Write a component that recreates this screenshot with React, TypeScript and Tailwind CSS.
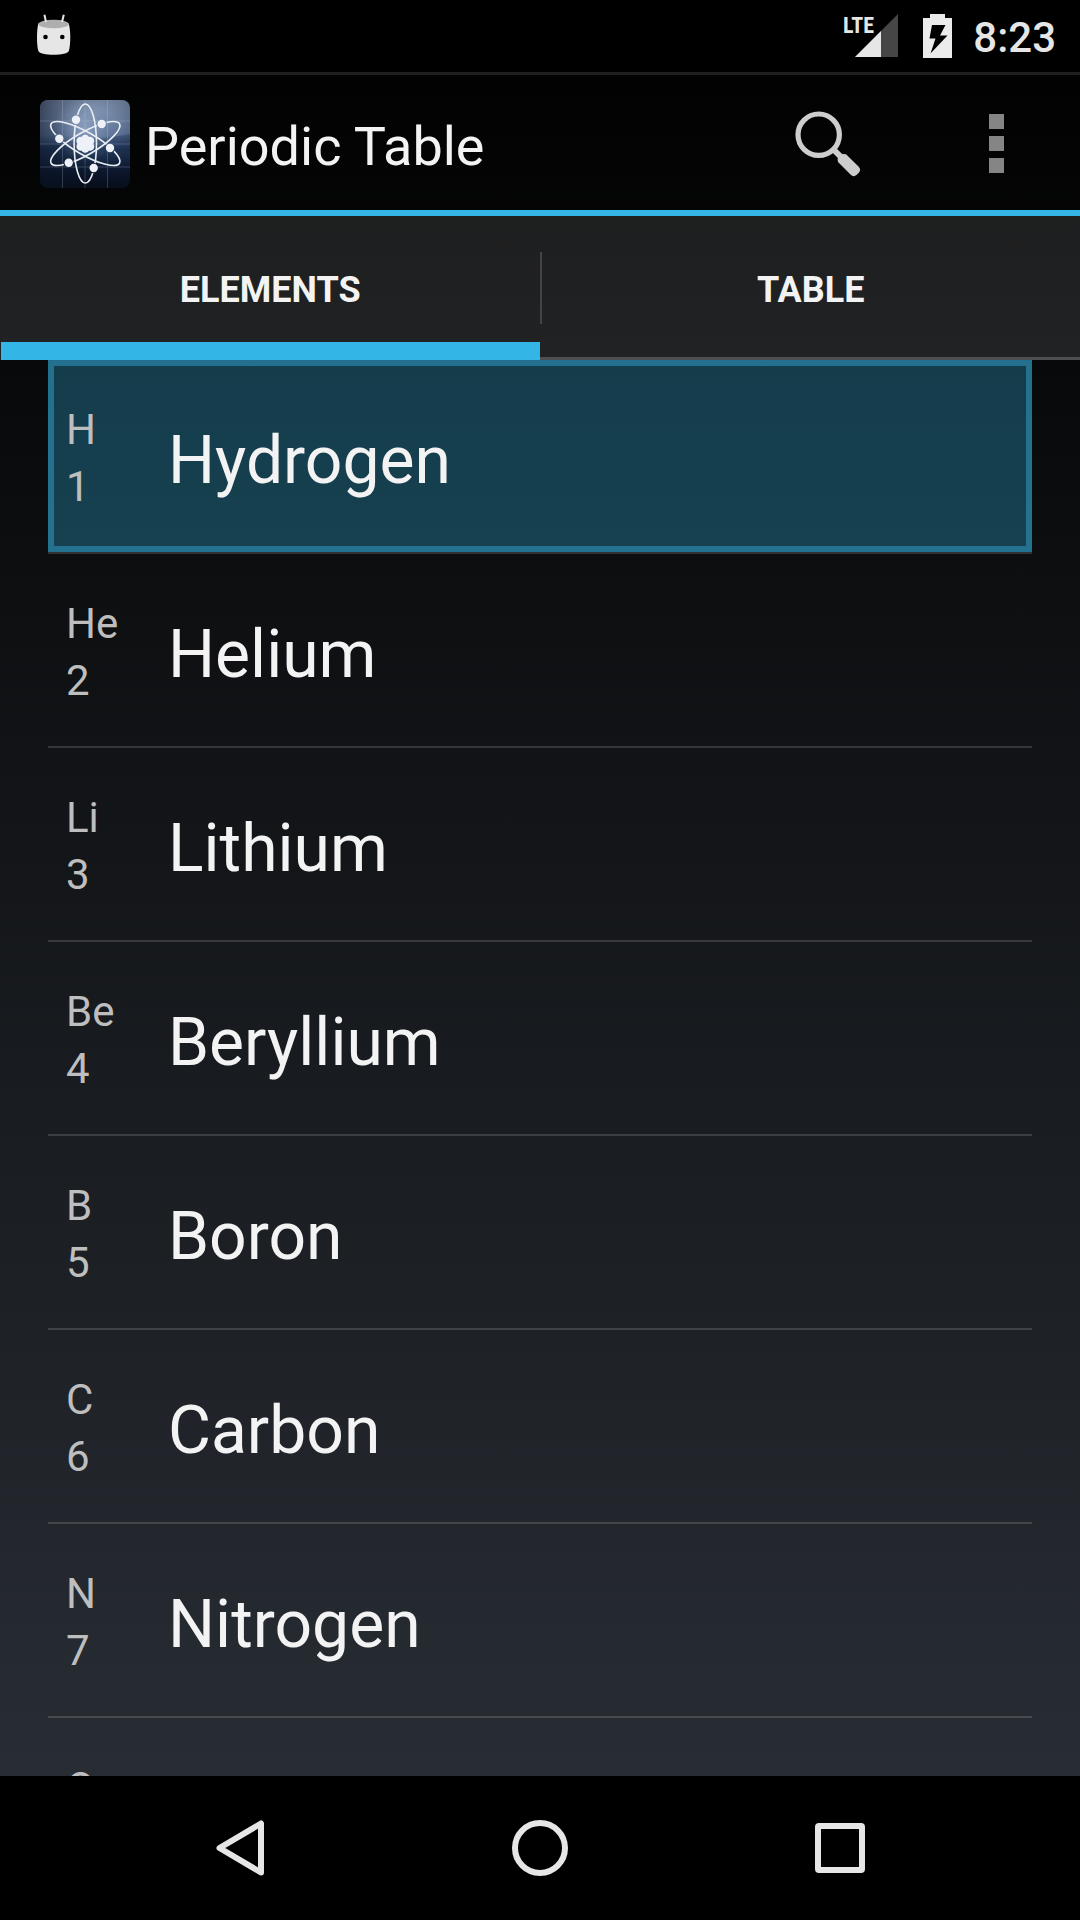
import { useState } from "react";

const ELEMENTS = [
  { symbol: "H", number: 1, name: "Hydrogen" },
  { symbol: "He", number: 2, name: "Helium" },
  { symbol: "Li", number: 3, name: "Lithium" },
  { symbol: "Be", number: 4, name: "Beryllium" },
  { symbol: "B", number: 5, name: "Boron" },
  { symbol: "C", number: 6, name: "Carbon" },
  { symbol: "N", number: 7, name: "Nitrogen" },
  { symbol: "O", number: 8, name: "Oxygen" },
];

const ELECTRONS = [
  [36, 19.7],
  [61.7, 24],
  [19.3, 38.7],
  [70, 48],
  [28.7, 62.7],
  [53.7, 68],
];

function DroidIcon() {
  return (
    <svg width="36" height="44" viewBox="0 0 36 44" aria-hidden="true">
      <path d="M2.4 9.5C.6 15 .6 30 2.2 36.5 3.2 42.3 32 42.3 33 36.5 34.8 30 34.8 15 32.6 9.500z" fill="#e6e6e6" />
      <ellipse cx="17.600" cy="10" rx="15.200" ry="4.300" fill="#aeaeae" />
      <path d="M8.400.8 10 8M27.800.8 26 8" stroke="#e6e6e6" strokeWidth="2" />
      <circle cx="9.500" cy="23" r="2.300" fill="#000" />
      <circle cx="26.300" cy="23" r="2.300" fill="#000" />
    </svg>
  );
}

function SignalIcon() {
  return (
    <svg width="57" height="44" viewBox="0 0 57 44" role="img" aria-label="LTE signal">
      <path d="M13 43 56 0V43z" fill="#464646" />
      <path d="M13 43 39 17V43z" fill="#e6e6e6" />
      <text x="1" y="19" fontSize="22" className="font-['Roboto_Condensed','Liberation_Sans_Narrow',Roboto,sans-serif] font-bold" fill="#e6e6e6">
        LTE
      </text>
    </svg>
  );
}

function BatteryIcon() {
  return (
    <svg width="29" height="44" viewBox="0 0 29 44" role="img" aria-label="Battery charging">
      <path d="M7 0H22V4H29V44H0V4H7z" fill="#ebebeb" />
      <path d="M9 11H22.500L17 21.500H24.500L7.500 39.500 12.500 24.500H6.500z" fill="#000" />
    </svg>
  );
}

function AtomLogo() {
  return (
    <svg width="90" height="88" viewBox="0 0 90 88" aria-hidden="true">
      <defs>
        <linearGradient id="sky" x1="0" y1="0" x2="0" y2="1">
          <stop offset="0" stopColor="#8295b1" />
          <stop offset=".4" stopColor="#5b7093" />
          <stop offset=".55" stopColor="#233b5d" />
          <stop offset=".8" stopColor="#0d1b33" />
          <stop offset="1" stopColor="#050a14" />
        </linearGradient>
        <radialGradient id="shade" cx=".65" cy=".35" r=".8">
          <stop offset=".3" stopColor="#0a1222" stopOpacity="0" />
          <stop offset="1" stopColor="#0a1222" stopOpacity=".7" />
        </radialGradient>
        <radialGradient id="glow">
          <stop offset="0" stopColor="#dbe8ff" stopOpacity=".35" />
          <stop offset="1" stopColor="#a9c2ea" stopOpacity="0" />
        </radialGradient>
        <mask id="gaps">
          <rect width="90" height="88" fill="#fff" />
          {ELECTRONS.map(([x, y]) => (
            <circle key={x} cx={x} cy={y} r="5.200" fill="#000" />
          ))}
        </mask>
      </defs>
      <rect width="90" height="88" rx="8" fill="url(#sky)" />
      <path d="M0 44Q50 42 90 34V52H0z" fill="#1a2f50" opacity=".35" />
      <rect width="90" height="88" rx="8" fill="url(#shade)" />
      <circle cx="45" cy="30" r="32" fill="url(#glow)" />
      <path d="M22.500 0V88M45 0V88M67.500 0V88M0 21H90M0 44H90M0 67H90" stroke="#c3d3ea" strokeWidth="1" opacity=".22" />
      <g mask="url(#gaps)" fill="none" stroke="#e9eef5" strokeWidth="1.600">
        <ellipse cx="45.300" cy="43.500" rx="11.200" ry="39.500" />
        <ellipse cx="45.300" cy="43.500" rx="11.200" ry="39.500" transform="rotate(60 45.300 43.500)" />
        <ellipse cx="45.300" cy="43.500" rx="11.200" ry="39.500" transform="rotate(-60 45.300 43.500)" />
      </g>
      <g fill="#eef2f8">
        {ELECTRONS.map(([x, y]) => (
          <circle key={x} cx={x} cy={y} r="4.200" />
        ))}
        <circle cx="45.300" cy="43.700" r="6" />
        <circle cx="45.300" cy="39" r="4.300" />
        <circle cx="45.300" cy="48.500" r="4.300" />
        <circle cx="40.700" cy="41" r="4.300" />
        <circle cx="50" cy="41" r="4.300" />
        <circle cx="40.700" cy="46.500" r="4.300" />
        <circle cx="50" cy="46.500" r="4.300" />
      </g>
    </svg>
  );
}

function SearchIcon() {
  return (
    <svg width="66" height="66" viewBox="0 0 66 66" aria-hidden="true">
      <circle cx="23.700" cy="23.700" r="20.700" fill="none" stroke="#cdcdcd" strokeWidth="5.200" />
      <path d="M37 37 48 48" stroke="#cdcdcd" strokeWidth="6" />
      <path
        d="M44 44.500Q46 42.500 51 43.200L63.500 55.500Q66.500 58.500 64 61.500L61.500 64Q58.500 66.500 55.500 63.500L43 51Q42 46.500 44 44.500z"
        fill="#cdcdcd"
      />
    </svg>
  );
}

function StatusBar() {
  return (
    <div className="flex h-[72px] shrink-0 items-center justify-between bg-black pr-6 pl-9">
      <DroidIcon />
      <div className="flex items-center">
        <SignalIcon />
        <div className="pr-[21px] pl-6">
          <BatteryIcon />
        </div>
        <span className="pt-1 text-[42px] leading-none font-medium text-[#e6e6e6]">8:23</span>
      </div>
    </div>
  );
}

function ActionBar() {
  return (
    <header className="flex h-36 shrink-0 items-stretch border-t-[3px] border-b-[6px] border-t-[#1f1f1f] border-b-[#33b5e5] pt-[2px] pl-10">
      <div className="flex flex-1 items-center gap-[15px]">
        <AtomLogo />
        <h1 className="pt-1.5 text-[54px] leading-none text-[#f3f3f3]">Periodic Table</h1>
      </div>
      <button type="button" aria-label="Search" className="flex w-[168px] items-center justify-center">
        <SearchIcon />
      </button>
      <button type="button" aria-label="More options" className="flex w-[168px] flex-col items-center justify-center gap-[7px]">
        <span className="size-[15px] bg-[#858585]" />
        <span className="size-[15px] bg-[#858585]" />
        <span className="size-[15px] bg-[#858585]" />
      </button>
    </header>
  );
}

function Tabs({ active, onSelect }: { active: number; onSelect: (i: number) => void }) {
  const on = "flex-1 border-b-[18px] border-[#33b5e5] pt-[22px]";
  const off = "flex-1 border-b-[3px] border-[#4f4f51] pt-[7px]";
  return (
    <div role="tablist" className="flex h-36 shrink-0 bg-white/10 pl-px text-[36px] leading-none font-bold text-[#f3f3f3]">
      <button type="button" role="tab" aria-selected={active === 0} onClick={() => onSelect(0)} className={active === 0 ? on : off}>
        ELEMENTS
      </button>
      <div className="flex items-center border-b-[3px] border-[#4f4f51] pt-[3px]">
        <span className="h-[72px] w-[2px] bg-[#444446]" />
      </div>
      <button type="button" role="tab" aria-selected={active === 1} onClick={() => onSelect(1)} className={active === 1 ? on : off}>
        TABLE
      </button>
    </div>
  );
}

function ElementList() {
  const [selected, setSelected] = useState(1);
  return (
    <ul className="min-h-0 flex-1 overflow-hidden px-12">
      {ELEMENTS.map((e) => (
        <li key={e.number} className="border-b-2 border-white/15">
          <button
            type="button"
            onClick={() => setSelected(e.number)}
            className={
              "flex h-48 w-full items-center border-[6px] bg-clip-padding px-3 pt-1 text-left " +
              (selected === e.number ? "border-[#33b5e5]/60 bg-[#33b5e5]/30" : "border-transparent")
            }
          >
            <span className="flex w-[102px] flex-col text-[42px] leading-[57px] text-[#bebebe]">
              <span>{e.symbol}</span>
              <span>{e.number}</span>
            </span>
            <span className="pt-1.5 text-[66px] leading-none text-[#f3f3f3]">{e.name}</span>
          </button>
        </li>
      ))}
    </ul>
  );
}

function NavBar() {
  return (
    <nav className="grid h-36 shrink-0 grid-cols-3 bg-black px-[90px]">
      <button type="button" aria-label="Back" className="flex items-center justify-center">
        <svg width="48" height="56" viewBox="0 0 48 56" fill="none" stroke="#e6e6e6" strokeWidth="6" strokeLinejoin="round" aria-hidden="true">
          <path d="M45 3.500V52.500L3.500 28z" />
        </svg>
      </button>
      <button type="button" aria-label="Home" className="flex items-center justify-center">
        <span className="size-14 rounded-full border-[6px] border-[#e6e6e6]" />
      </button>
      <button type="button" aria-label="Recent apps" className="flex items-center justify-center">
        <span className="size-[50px] rounded-[4px] border-[6px] border-[#e6e6e6]" />
      </button>
    </nav>
  );
}

export default function App() {
  const [tab, setTab] = useState(0);
  return (
    <div className="flex h-screen flex-col bg-black font-[Roboto,sans-serif]">
      <div className="flex min-h-0 flex-1 flex-col bg-[linear-gradient(to_bottom,#000000,#282d34)]">
        <StatusBar />
        <ActionBar />
        <Tabs active={tab} onSelect={setTab} />
        <ElementList />
      </div>
      <NavBar />
    </div>
  );
}
